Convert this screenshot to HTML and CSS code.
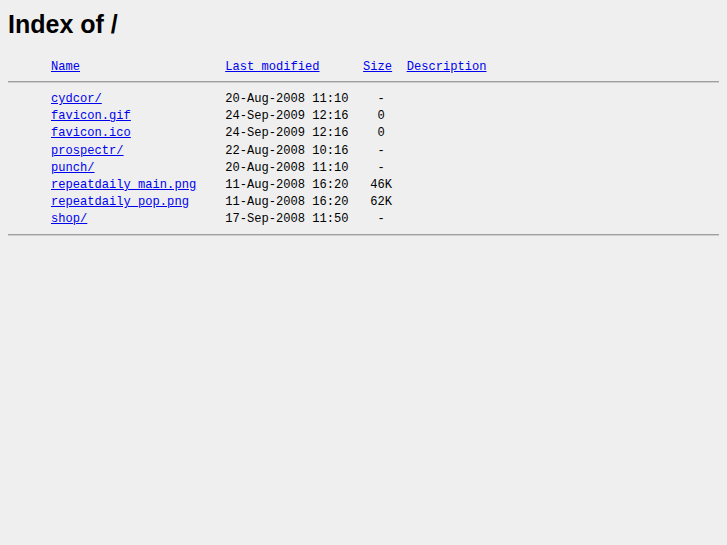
FILE: index.html
```html
<!DOCTYPE html>
<html>
<head>
<meta charset="utf-8">
<title>Index of /</title>
<link rel="stylesheet" href="styles.css">
</head>
<body>
<h1 class="title">Index of /</h1>
<div class="listing">
<div class="row head"><span class="icon"></span><a href="#">Name</a>                    <a href="#">Last modified</a>      <a href="#">Size</a>  <a href="#">Description</a></div>
<hr class="rule rule-top">
<div class="row"><span class="icon"></span><a href="#">cydcor/</a>                 20-Aug-2008 11:10    -   </div>
<div class="row"><span class="icon"></span><a href="#">favicon.gif</a>             24-Sep-2009 12:16    0   </div>
<div class="row"><span class="icon"></span><a href="#">favicon.ico</a>             24-Sep-2009 12:16    0   </div>
<div class="row"><span class="icon"></span><a href="#">prospectr/</a>              22-Aug-2008 10:16    -   </div>
<div class="row"><span class="icon"></span><a href="#">punch/</a>                  20-Aug-2008 11:10    -   </div>
<div class="row"><span class="icon"></span><a href="#">repeatdaily_main.png</a>    11-Aug-2008 16:20   46K  </div>
<div class="row"><span class="icon"></span><a href="#">repeatdaily_pop.png</a>     11-Aug-2008 16:20   62K  </div>
<div class="row"><span class="icon"></span><a href="#">shop/</a>                   17-Sep-2008 11:50    -   </div>
<hr class="rule rule-bottom">
</div>
</body>
</html>
```
FILE: styles.css
```css
html, body {
  background: #efefef;
}
body {
  margin: 8px;
  color: #000;
}
.title {
  font-family: "Liberation Sans", Arial, sans-serif;
  font-size: 25px;
  font-weight: bold;
  margin: 2px 0 0 0;
  line-height: 29px;
}
.listing {
  margin-top: 20px;
  font-family: "Liberation Mono", "Courier New", monospace;
  font-size: 12.1px;
  line-height: 17.15px;
}
.row {
  white-space: pre;
}
.icon {
  display: inline-block;
  width: 43px;
}
.listing a {
  color: #0000ee;
  text-decoration: underline;
}
.rule {
  border: 0;
  border-top: 1px solid #a0a0a0;
  border-bottom: 1px solid #cfcfcf;
  height: 0;
  margin-left: -1px;
  margin-right: -1px;
}
.rule-top {
  margin-top: 5px;
  margin-bottom: 8px;
}
.rule-bottom {
  margin-top: 6px;
  margin-bottom: 7px;
}
```
